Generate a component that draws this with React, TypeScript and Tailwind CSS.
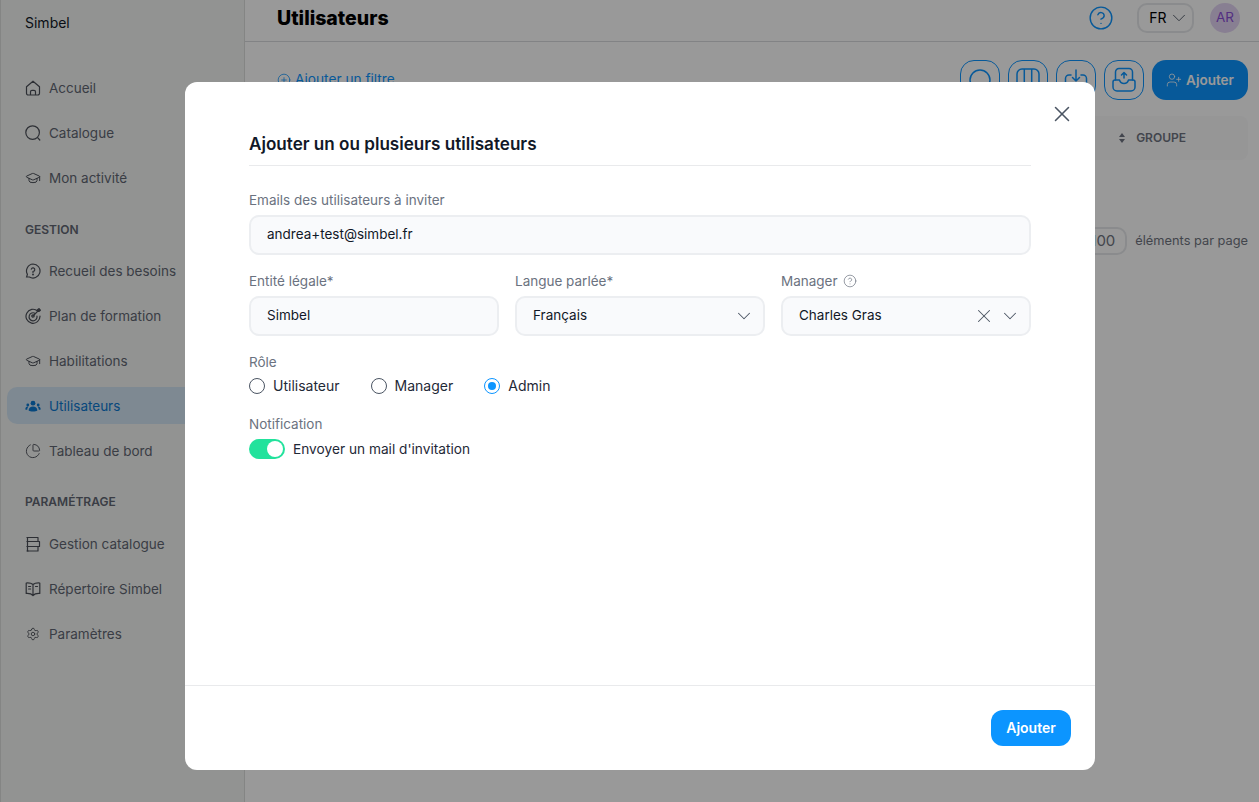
import React from 'react';
import { ChevronDown, CirclePlus, CircleHelp, ChartPie, GraduationCap, Settings, UserPlus, X } from 'lucide-react';

const font = "font-['Inter','Liberation_Sans',sans-serif]";

function HomeIcon() {
  return (
    <svg width="16" height="16" viewBox="0 0 16 16" fill="none" stroke="currentColor" strokeWidth="1.2" strokeLinejoin="round">
      <path d="M1.5 6.8 8 1.2l6.5 5.6v6.4a1.8 1.8 0 0 1-1.8 1.8H3.3a1.8 1.8 0 0 1-1.8-1.8z" />
      <path d="M5.5 15v-3.2A1.5 1.5 0 0 1 7 10.3h2a1.5 1.5 0 0 1 1.5 1.5V15" />
    </svg>
  );
}

function SearchIcon() {
  return (
    <svg width="16" height="16" viewBox="0 0 16 16" fill="none" stroke="currentColor" strokeWidth="1.2" strokeLinecap="round">
      <circle cx="7.6" cy="7.6" r="6.8" />
      <path d="m12.6 12.6 2.2 2.4" />
    </svg>
  );
}

function QuestionBubble() {
  return (
    <svg width="16" height="16" viewBox="0 0 16 16" fill="none" stroke="currentColor" strokeWidth="1.2" strokeLinecap="round">
      <path d="M8 1a7 7 0 1 1-3.6 13H1.6l.8-2.6A7 7 0 0 1 8 1z" />
      <path d="M6.3 6.1A1.8 1.8 0 1 1 8 8.5v.9" />
      <circle cx="8" cy="11.4" r=".4" />
    </svg>
  );
}

function TargetIcon() {
  return (
    <svg width="16" height="16" viewBox="0 0 16 16" fill="none" stroke="currentColor" strokeWidth="1.2" strokeLinecap="round">
      <path d="M12.6 3A7 7 0 1 0 15 8" />
      <path d="M10.2 5.4A4 4 0 1 0 12 8" />
      <circle cx="8" cy="8" r="1.2" />
      <path d="M8 8 14.6 1.4M12.4 3.4V1.8L14 .6v1.6h1.5l-1.4 1.2z" />
    </svg>
  );
}

function UsersIcon() {
  return (
    <svg width="16" height="16" viewBox="0 0 16 16" fill="currentColor">
      <circle cx="8" cy="5.2" r="2.4" />
      <circle cx="2.8" cy="7" r="1.4" />
      <circle cx="13.2" cy="7" r="1.4" />
      <path d="M3.6 12.6C3.6 9.8 5.6 8.4 8 8.4s4.400 1.400 4.400 4.200c-1 .8-2.600 1-4.400 1s-3.400-.2-4.400-1zM.3 11.400c0-1.600 1-2.800 2.300-2.800.3 0 .5 0 .7.100-.6.800-1 1.800-1.100 3.100-.8 0-1.500-.100-1.900-.400zM15.700 11.400c0-1.600-1-2.800-2.300-2.800-.3 0-.5 0-.7.100.6.800 1 1.800 1.100 3.100.8 0 1.500-.100 1.900-.400z" />
    </svg>
  );
}

function StackIcon() {
  return (
    <svg width="16" height="16" viewBox="0 0 16 16" fill="none" stroke="currentColor" strokeWidth="1.2" strokeLinejoin="round">
      <path d="M2.500 1.500h10.500v4H2.500zM2.500 5.500h12v5h-12zM2.500 10.500h10.500v4.500H2.500z" />
      <path d="M1.500 1.500h2M1.500 15h2M1.500 5.500h2M1.500 10.500h2" />
    </svg>
  );
}

function BookIcon() {
  return (
    <svg width="16" height="16" viewBox="0 0 16 16" fill="none" stroke="currentColor" strokeWidth="1.2" strokeLinecap="round" strokeLinejoin="round">
      <path d="M8 3.500C6.600 2.300 4 1.800 1.200 2v10.500c2.800-.2 5.400.4 6.800 2 1.400-1.600 4-2.200 6.800-2V2C12 1.800 9.400 2.300 8 3.500zM8 3.500v11" />
      <path d="M3.600 5.500h2M3.600 8h2M10.500 5.500h2" />
    </svg>
  );
}

function TrayUpload() {
  return (
    <svg width="24" height="26" viewBox="0 0 24 26" fill="none" stroke="currentColor" strokeWidth="1.500" strokeLinecap="round" strokeLinejoin="round">
      <path d="M3.500 13V5a3.500 3.500 0 0 1 3.500-3.500h10A3.500 3.500 0 0 1 20.500 5v8" />
      <path d="M1 15a2 2 0 0 1 2-2h4.500c.6 2.200 2.500 3.500 4.500 3.500s3.900-1.300 4.500-3.500H21a2 2 0 0 1 2 2v5a4 4 0 0 1-4 4H5a4 4 0 0 1-4-4z" />
      <path d="M12 11V5.500M9.500 8 12 5.500 14.500 8" />
    </svg>
  );
}

function TrayDownload() {
  return (
    <svg width="24" height="26" viewBox="0 0 24 26" fill="none" stroke="currentColor" strokeWidth="1.500" strokeLinecap="round" strokeLinejoin="round">
      <path d="M7 8H5a3.500 3.500 0 0 0-3.500 3.500V16a4 4 0 0 0 4 4h13a4 4 0 0 0 4-4v-4.500A3.500 3.500 0 0 0 19 8h-2" />
      <path d="M12 3v11M8.500 10.500 12 14l3.500-3.500" />
    </svg>
  );
}

function ColumnsIcon() {
  return (
    <svg width="24" height="24" viewBox="0 0 24 24" fill="none" stroke="currentColor" strokeWidth="1.500" strokeLinejoin="round">
      <rect x="1" y="1" width="22" height="22" rx="5" />
      <path d="M8.300 1v22M15.700 1v22" />
    </svg>
  );
}

function RoundSearch() {
  return (
    <svg width="24" height="24" viewBox="0 0 24 24" fill="none" stroke="currentColor" strokeWidth="1.500">
      <circle cx="12" cy="12" r="10" />
    </svg>
  );
}

function SortIcon() {
  return (
    <svg width="6" height="10" viewBox="0 0 6 10" fill="currentColor">
      <path d="M3 0 6 4H0zM3 10 0 6h6z" />
    </svg>
  );
}

type NavItem = { label: string; icon: React.ReactNode; active?: boolean };

const mainNav: NavItem[] = [
  { label: 'Accueil', icon: <HomeIcon /> },
  { label: 'Catalogue', icon: <SearchIcon /> },
  { label: 'Mon activité', icon: <GraduationCap size={16} strokeWidth={1.5} /> },
];

const gestionNav: NavItem[] = [
  { label: 'Recueil des besoins', icon: <QuestionBubble /> },
  { label: 'Plan de formation', icon: <TargetIcon /> },
  { label: 'Habilitations', icon: <GraduationCap size={16} strokeWidth={1.5} /> },
  { label: 'Utilisateurs', icon: <UsersIcon />, active: true },
  { label: 'Tableau de bord', icon: <ChartPie size={16} strokeWidth={1.4} /> },
];

const paramNav: NavItem[] = [
  { label: 'Gestion catalogue', icon: <StackIcon /> },
  { label: 'Répertoire Simbel', icon: <BookIcon /> },
  { label: 'Paramètres', icon: <Settings size={14} strokeWidth={1.5} /> },
];

function NavLink({ item }: { item: NavItem }) {
  return (
    <div
      className={
        item.active
          ? 'flex h-[37px] items-center gap-2 rounded-[10px] bg-[#d3e4f3] pl-[18px] text-[#0b78d0]'
          : 'flex h-[37px] items-center gap-2 rounded-[10px] pl-[18px] text-[#626773]'
      }
    >
      <span className={item.active ? 'flex w-4 justify-center' : 'flex w-4 justify-center text-[#4b4f58]'}>{item.icon}</span>
      <span className="text-[13.500px] leading-5">{item.label}</span>
    </div>
  );
}

function Sidebar() {
  return (
    <aside className="flex h-full w-[245px] shrink-0 flex-col border-r border-l border-r-[#dcdedc] border-l-[#dcdedc] bg-[#f4f6f4] pl-[6px] pr-3">
      <div className="pl-[18px] pt-[14px] text-sm leading-[18px] text-[#111827]">Simbel</div>
      <div className="mt-[37px] flex flex-col gap-2">
        {mainNav.map((item) => <NavLink key={item.label} item={item} />)}
      </div>
      <div className="mb-[14px] mt-[26px] pl-[18px] text-xs font-semibold leading-4 text-[#626773]">GESTION</div>
      <div className="flex flex-col gap-2">
        {gestionNav.map((item) => <NavLink key={item.label} item={item} />)}
      </div>
      <div className="mb-[15px] mt-[25px] pl-[18px] text-xs font-semibold leading-4 text-[#626773]">PARAMÉTRAGE</div>
      <div className="flex flex-col gap-2">
        {paramNav.map((item) => <NavLink key={item.label} item={item} />)}
      </div>
    </aside>
  );
}

function OutlineButton({ children }: { children: React.ReactNode }) {
  return (
    <button className="flex h-10 w-10 items-center justify-center rounded-[14px] border border-[#0c95ff] text-[#0c95ff]">
      {children}
    </button>
  );
}

function MainBehind() {
  return (
    <main className="flex min-w-0 flex-1 flex-col bg-white">
      <header className="flex h-[42px] items-center border-b border-[#d9dbde] pl-8 pr-[19px]">
        <h1 className="flex-1 -translate-y-[2px] text-[19.500px] font-extrabold text-black">Utilisateurs</h1>
        <CircleHelp size={26} strokeWidth={1.3} className="mr-[23px] -translate-y-[3px] text-[#0c95ff]" />
        <div className="mr-4 flex h-[30px] w-[57px] -translate-y-[3px] items-center justify-center gap-px rounded-[10px] border-2 border-[#e6e8eb] pl-2 text-sm text-black">
          FR <ChevronDown size={22} strokeWidth={1} className="text-[#4b5563]" />
        </div>
        <div className="flex h-[30px] w-[30px] -translate-y-[3px] items-center justify-center rounded-full bg-[#e3d4f4] text-[13.500px] text-[#8b4fd8]">AR</div>
      </header>
      <div className="flex h-[58px] items-end gap-2 pl-8 pr-[11px]">
        <div className="mb-[10px] flex flex-1 items-center gap-1 text-[13.700px] text-[#0c95ff]">
          <CirclePlus size={14} strokeWidth={1.300} />
          Ajouter un filtre
        </div>
        <OutlineButton><RoundSearch /></OutlineButton>
        <OutlineButton><ColumnsIcon /></OutlineButton>
        <OutlineButton><TrayDownload /></OutlineButton>
        <OutlineButton><TrayUpload /></OutlineButton>
        <button className="flex h-10 w-[96px] items-center justify-center gap-1 rounded-[14px] bg-[#0c95ff] text-[13.500px] font-semibold text-white">
          <UserPlus size={16} strokeWidth={1.200} /> Ajouter
        </button>
      </div>
      <div className="mr-[11px] mt-4 flex h-[44px] items-center justify-end rounded-lg bg-[#fafafb] pr-[62px] text-xs font-semibold text-[#6f7480]">
        <span className="mr-[11px]"><SortIcon /></span> GROUPE
      </div>
      <div className="mt-[67px] flex items-center justify-end gap-2 pr-[11px] text-[12.800px] text-[#6f7480]">
        <div className="flex h-[28px] w-[44px] items-center justify-end rounded-[10px] border-2 border-[#e6e8eb] pr-[10px] text-[15px]">100</div>
        éléments par page
      </div>
    </main>
  );
}

function Label({ children }: { children: React.ReactNode }) {
  return <div className="text-[13.500px] leading-[18px] text-[#6b7280]">{children}</div>;
}

function Field({ children, className = '' }: { children: React.ReactNode; className?: string }) {
  return (
    <div className={`mt-[6px] flex h-10 items-center rounded-[10px] border-2 border-[#eceef1] bg-[#f9fafc] pb-[2px] pl-4 text-[13.500px] text-[#111827] ${className}`}>
      {children}
    </div>
  );
}

function Radio({ label, checked }: { label: string; checked?: boolean }) {
  return (
    <label className="flex items-center gap-2 text-sm leading-5 text-[#1f2937]">
      <span className={checked
        ? 'flex h-4 w-4 items-center justify-center rounded-full border border-[#0c95ff] bg-white'
        : 'h-4 w-4 rounded-full border border-[#4b5563] bg-white'}
      >
        {checked && <span className="h-2 w-2 rounded-full bg-[#0c95ff]" />}
      </span>
      {label}
    </label>
  );
}

function Modal() {
  return (
    <div className="flex h-[688px] w-[910px] flex-col rounded-xl bg-white">
      <div className="flex justify-end pr-5 pt-[19px]">
        <X size={26} strokeWidth={1.400} className="text-[#4b5563]" />
      </div>
      <div className="flex-1 px-16">
        <h2 className="mt-[5px] border-b border-[#e9eaec] pb-[9px] text-[17.100px] font-semibold leading-6 text-[#111827]">
          Ajouter un ou plusieurs utilisateurs
        </h2>
        <div className="mt-[25px]">
          <Label>Emails des utilisateurs à inviter</Label>
          <Field className="pr-4">andrea+test@simbel.fr</Field>
        </div>
        <div className="mt-[17px] grid grid-cols-3 gap-4">
          <div>
            <Label>Entité légale*</Label>
            <Field className="pr-4">Simbel</Field>
          </div>
          <div>
            <Label>Langue parlée*</Label>
            <Field className="justify-between pr-2">
              Français <ChevronDown size={22} strokeWidth={1.100} className="translate-y-[1px] text-[#4b5563]" />
            </Field>
          </div>
          <div>
            <div className="flex items-center gap-[5px]">
              <Label>Manager</Label>
              <CircleHelp size={14} strokeWidth={1.200} className="text-[#6b7280]" />
            </div>
            <Field className="justify-between pr-2">
              Charles Gras
              <span className="flex translate-y-[1px] items-center gap-1 text-[#4b5563]">
                <X size={22} strokeWidth={1.100} />
                <ChevronDown size={22} strokeWidth={1.100} />
              </span>
            </Field>
          </div>
        </div>
        <div className="mt-[17px]">
          <Label>Rôle</Label>
          <div className="mt-[5px] flex items-center gap-[31px]">
            <Radio label="Utilisateur" />
            <Radio label="Manager" />
            <Radio label="Admin" checked />
          </div>
        </div>
        <div className="mt-[19px]">
          <Label>Notification</Label>
          <div className="mt-[6px] flex items-center gap-2 text-[13.700px] text-[#1f2937]">
            <span className="flex h-5 w-9 items-center justify-end rounded-full bg-[#22e29c] pr-[2px]">
              <span className="h-4 w-4 rounded-full bg-white" />
            </span>
            Envoyer un mail d'invitation
          </div>
        </div>
      </div>
      <div className="flex h-[85px] items-center justify-end border-t border-[#e9eaec] pr-6">
        <button className="h-9 w-20 rounded-xl bg-[#0c95ff] text-sm font-semibold text-white">Ajouter</button>
      </div>
    </div>
  );
}

export default function App() {
  return (
    <div className={`relative flex h-[802px] w-[1259px] overflow-hidden bg-white ${font}`}>
      <Sidebar />
      <MainBehind />
      {/* backdrop, the dialog sits a bit off centre in the capture */}
      <div className="absolute inset-0 bg-black/40 pl-[185px] pt-[82px]">
        <Modal />
      </div>
    </div>
  );
}
